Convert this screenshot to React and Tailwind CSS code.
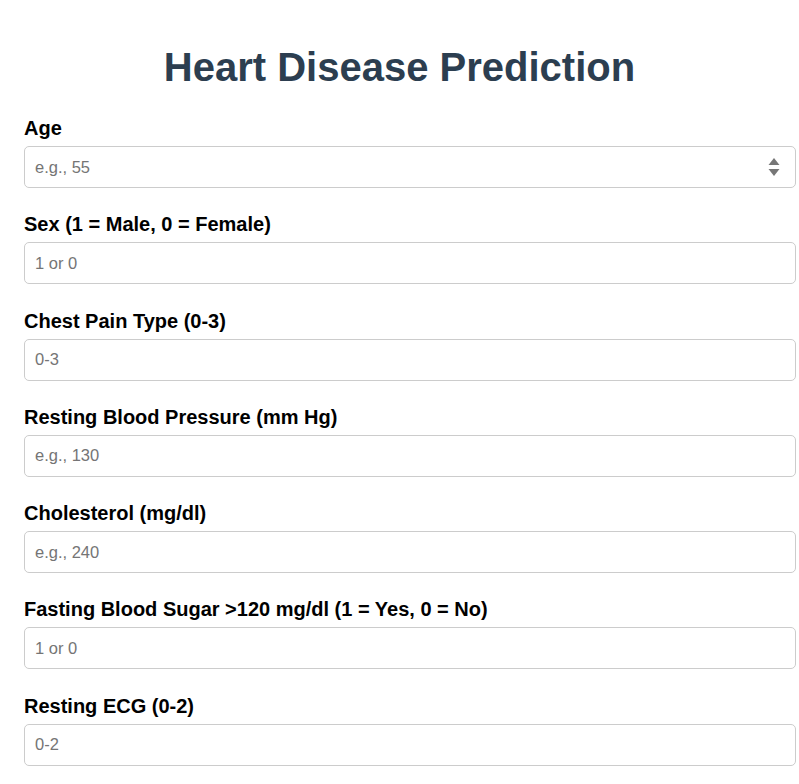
import React from 'react'

const fields = [
  { label: 'Age', placeholder: 'e.g., 55', spinner: true },
  { label: 'Sex (1 = Male, 0 = Female)', placeholder: '1 or 0' },
  { label: 'Chest Pain Type (0-3)', placeholder: '0-3' },
  { label: 'Resting Blood Pressure (mm Hg)', placeholder: 'e.g., 130' },
  { label: 'Cholesterol (mg/dl)', placeholder: 'e.g., 240' },
  { label: 'Fasting Blood Sugar >120 mg/dl (1 = Yes, 0 = No)', placeholder: '1 or 0' },
  { label: 'Resting ECG (0-2)', placeholder: '0-2' },
]

function Spinner() {
  return (
    <svg className="absolute right-[15px] top-[10px] pointer-events-none" width="14" height="22" viewBox="0 0 14 22">
      <path d="M7 2 L12.5 9 L1.5 9 Z" fill="#777" />
      <path d="M1.5 13 L12.5 13 L7 20 Z" fill="#777" />
    </svg>
  )
}

export default function App() {
  return (
    <div className="min-h-screen bg-white font-['Liberation_Sans',Arial,sans-serif] pl-6 pr-[3px] pt-[45px]">
      <h1 className="text-center text-[40px] leading-[45px] font-bold text-[#2c3e50] mb-[27px] pr-[21px]">
        Heart Disease Prediction
      </h1>
      <form className="flex flex-col gap-[25.3px]">
        {fields.map((f) => (
          <div key={f.label} className="flex flex-col">
            <label className="text-[20px] leading-[22px] font-bold text-black mb-[7px]">{f.label}</label>
            <div className="relative">
              <input
                type="text"
                placeholder={f.placeholder}
                className="w-full h-[42px] px-[10px] border border-[#ccc] rounded-[5px] text-[16.5px] text-black placeholder:text-[#757575] outline-none"
              />
              {f.spinner && <Spinner />}
            </div>
          </div>
        ))}
      </form>
    </div>
  )
}
